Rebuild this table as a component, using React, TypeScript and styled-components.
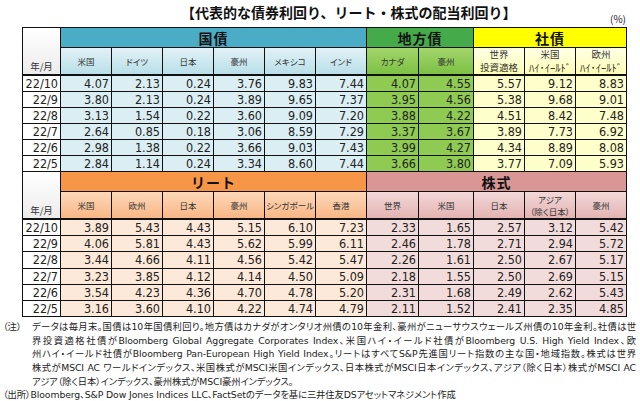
import React from "react";
import styled, { createGlobalStyle } from "styled-components";

const Global = createGlobalStyle`
  html, body { margin: 0; padding: 0; background: #fff; }
  body { width: 640px; height: 401px; overflow: hidden; font-family: "Noto Sans CJK JP", sans-serif; color: #222; }
`;

type Tone = { head: string; subTop: string; subBottom: string; data: string };

const tones: Record<string, Tone> = {
  blue: { head: "#4bacc6", subTop: "#e2f1f6", subBottom: "#b9dfe9", data: "#daeef3" },
  green: { head: "#45ab4a", subTop: "#a3d56c", subBottom: "#7cc144", data: "#8fca52" },
  yellow: { head: "#ffff00", subTop: "#ffffe6", subBottom: "#ffffb4", data: "#ffffcc" },
  orange: { head: "#f79646", subTop: "#fcd8ba", subBottom: "#f9b786", data: "#fde9d9" },
  pink: { head: "#d99694", subTop: "#f2d8d7", subBottom: "#e3b4b3", data: "#f2dcdb" },
};

const COLS = "37px repeat(6, 50px) 51px 54px repeat(3, 50px)";
const NUM_FONT = `"DejaVu Sans Condensed", "DejaVu Sans", sans-serif`;

const Page = styled.div`
  width: 640px;
  height: 401px;
  overflow: hidden;
`;

const Header = styled.div`
  height: 27px;
  display: flex;
  justify-content: space-between;
  padding: 0 14px 0 181px;
  box-sizing: border-box;
`;

const Title = styled.div`
  margin-top: 2px;
  font-size: 14px;
  line-height: 20px;
  font-weight: 700;
  color: #111;
  white-space: nowrap;
`;

const Unit = styled.div`
  align-self: flex-end;
  font-size: 10px;
  line-height: 14px;
  margin-bottom: 1px;
  color: #222;
`;

const Grid = styled.div<{ $rowH: number }>`
  margin-left: 22px;
  width: fit-content;
  display: grid;
  grid-template-columns: ${COLS};
  grid-template-rows: 19px 27px repeat(6, ${(p) => p.$rowH}px);
  gap: 1px;
  background: #111;
  border: 1px solid #111;
  & + & {
    border-top: none;
  }
`;

const Corner = styled.div`
  grid-row: 1 / span 2;
  grid-column: 1;
  background: linear-gradient(#ffffff, #ececec);
  border-bottom: 1px solid #111;
  display: flex;
  align-items: flex-end;
  justify-content: center;
  font-size: 9.5px;
  line-height: 15px;
  color: #333;
`;

const GroupHead = styled.div<{ $tone: Tone; $span: number }>`
  grid-column: span ${(p) => p.$span};
  background: ${(p) => p.$tone.head};
  display: flex;
  align-items: center;
  justify-content: center;
  font-size: 14px;
  font-weight: 700;
  color: #111;
  letter-spacing: 1px;
`;

const SubHead = styled.div<{ $tone: Tone; $big: boolean }>`
  background: linear-gradient(${(p) => p.$tone.subTop}, ${(p) => p.$tone.subBottom});
  border-bottom: 1px solid #111;
  display: flex;
  align-items: center;
  justify-content: center;
  text-align: center;
  font-size: ${(p) => (p.$big ? "9.5px" : "8.5px")};
  line-height: ${(p) => (p.$big ? "13px" : "12px")};
  font-feature-settings: ${(p) => (p.$big ? "normal" : `"palt"`)};
  color: #333;
  white-space: nowrap;
`;

const HalfWidth = styled.span`
  font-size: 10.5px;
`;

const DateCell = styled.div`
  background: #fff;
  text-align: right;
  padding-right: 2px;
  font-family: ${NUM_FONT};
  font-size: 12.5px;
  line-height: 15px;
  color: #222;
`;

const NumCell = styled.div<{ $tone: Tone }>`
  background: ${(p) => p.$tone.data};
  text-align: right;
  padding-right: 2px;
  font-family: ${NUM_FONT};
  font-size: 12.5px;
  line-height: 15px;
  color: #222;
`;

const Notes = styled.div`
  margin-top: 3px;
  padding: 0 4px 0 3px;
  font-family: "DejaVu Sans", "Noto Sans CJK JP", sans-serif;
  font-size: 9.3px;
  letter-spacing: -0.1px;
  font-feature-settings: "palt";
  line-height: 13.6px;
  color: #222;
`;

const NoteBlock = styled.div`
  display: grid;
  grid-template-columns: 29px 1fr;
`;

const NoteLine = styled.div<{ $justify?: boolean }>`
  white-space: nowrap;
  text-align: ${(p) => (p.$justify ? "justify" : "left")};
  text-align-last: ${(p) => (p.$justify ? "justify" : "left")};
`;

const NoteLabel = styled.span``;

type Group = { label: string; tone: Tone; big?: boolean; subs: React.ReactNode[] };

type SectionProps = { groups: Group[]; rows: { date: string; values: string[] }[]; rowH: number };

const Section: React.FC<SectionProps> = ({ groups, rows, rowH }) => {
  const toneForCol: Tone[] = [];
  groups.forEach((g) => g.subs.forEach(() => toneForCol.push(g.tone)));
  return (
    <Grid $rowH={rowH}>
      <Corner>年/月</Corner>
      {groups.map((g) => (
        <GroupHead key={g.label} $tone={g.tone} $span={g.subs.length}>
          {g.label}
        </GroupHead>
      ))}
      {groups.flatMap((g, gi) =>
        g.subs.map((s, si) => (
          <SubHead key={`${gi}-${si}`} $tone={g.tone} $big={!!g.big}>
            <span>{s}</span>
          </SubHead>
        ))
      )}
      {rows.map((r) => (
        <React.Fragment key={r.date}>
          <DateCell>{r.date}</DateCell>
          {r.values.map((v, i) => (
            <NumCell key={i} $tone={toneForCol[i]}>
              {v}
            </NumCell>
          ))}
        </React.Fragment>
      ))}
    </Grid>
  );
};

const two = (a: React.ReactNode, b: React.ReactNode) => (
  <>
    {a}
    <br />
    {b}
  </>
);

const hy = <HalfWidth>ﾊｲ･ｲｰﾙﾄﾞ</HalfWidth>;

const bondGroups: Group[] = [
  { label: "国債", tone: tones.blue, subs: ["米国", "ドイツ", "日本", "豪州", "メキシコ", "インド"] },
  { label: "地方債", tone: tones.green, subs: ["カナダ", "豪州"] },
  {
    label: "社債",
    tone: tones.yellow,
    big: true,
    subs: [two("世界", "投資適格"), two("米国", hy), two("欧州", hy)],
  },
];

const bondRows = [
  { date: "22/10", values: "4.07 2.13 0.24 3.76 9.83 7.44 4.07 4.55 5.57 9.12 8.83".split(" ") },
  { date: "22/9", values: "3.80 2.13 0.24 3.89 9.65 7.37 3.95 4.56 5.38 9.68 9.01".split(" ") },
  { date: "22/8", values: "3.13 1.54 0.22 3.60 9.09 7.20 3.88 4.22 4.51 8.42 7.48".split(" ") },
  { date: "22/7", values: "2.64 0.85 0.18 3.06 8.59 7.29 3.37 3.67 3.89 7.73 6.92".split(" ") },
  { date: "22/6", values: "2.98 1.38 0.22 3.66 9.03 7.43 3.99 4.27 4.34 8.89 8.08".split(" ") },
  { date: "22/5", values: "2.84 1.14 0.24 3.34 8.60 7.44 3.66 3.80 3.77 7.09 5.93".split(" ") },
];

const eqGroups: Group[] = [
  { label: "リート", tone: tones.orange, subs: ["米国", "欧州", "日本", "豪州", "シンガポール", "香港"] },
  {
    label: "株式",
    tone: tones.pink,
    subs: ["世界", "米国", "日本", two("アジア", "（除く日本）"), "豪州"],
  },
];

const eqRows = [
  { date: "22/10", values: "3.89 5.43 4.43 5.15 6.10 7.23 2.33 1.65 2.57 3.12 5.42".split(" ") },
  { date: "22/9", values: "4.06 5.81 4.43 5.62 5.99 6.11 2.46 1.78 2.71 2.94 5.72".split(" ") },
  { date: "22/8", values: "3.44 4.66 4.11 4.56 5.42 5.47 2.26 1.61 2.50 2.67 5.17".split(" ") },
  { date: "22/7", values: "3.23 3.85 4.12 4.14 4.50 5.09 2.18 1.55 2.50 2.69 5.15".split(" ") },
  { date: "22/6", values: "3.54 4.23 4.36 4.70 4.78 5.20 2.31 1.68 2.49 2.62 5.43".split(" ") },
  { date: "22/5", values: "3.16 3.60 4.10 4.22 4.74 4.79 2.11 1.52 2.41 2.35 4.85".split(" ") },
];

export default function App() {
  return (
    <Page>
      <Global />
      <Header>
        <Title>【代表的な債券利回り、リート・株式の配当利回り】</Title>
        <Unit>(%)</Unit>
      </Header>
      <Section groups={bondGroups} rows={bondRows} rowH={15} />
      <Section groups={eqGroups} rows={eqRows} rowH={15.2} />
      <Notes>
        <NoteBlock>
          <NoteLabel>（注）</NoteLabel>
          <div>
            <NoteLine $justify>
              データは毎月末。国債は10年国債利回り。地方債はカナダがオンタリオ州債の10年金利、豪州がニューサウスウェールズ州債の10年金利。社債は世
            </NoteLine>
            <NoteLine $justify>
              界投資適格社債がBloomberg Global Aggregate Corporates Index、米国ハイ・イールド社債がBloomberg U.S. High Yield Index、欧
            </NoteLine>
            <NoteLine $justify>
              州ハイ・イールド社債がBloomberg Pan-European High Yield Index。リートはすべてS&amp;P先進国リート指数の主な国・地域指数。株式は世界
            </NoteLine>
            <NoteLine $justify>
              株式がMSCI AC ワールドインデックス、米国株式がMSCI米国インデックス、日本株式がMSCI日本インデックス、アジア（除く日本）株式がMSCI AC
            </NoteLine>
            <NoteLine>アジア（除く日本）インデックス、豪州株式がMSCI豪州インデックス。</NoteLine>
          </div>
        </NoteBlock>
        <NoteLine>
          （出所）Bloomberg、S&amp;P Dow Jones Indices LLC、FactSetのデータを基に三井住友DSアセットマネジメント作成
        </NoteLine>
      </Notes>
    </Page>
  );
}
